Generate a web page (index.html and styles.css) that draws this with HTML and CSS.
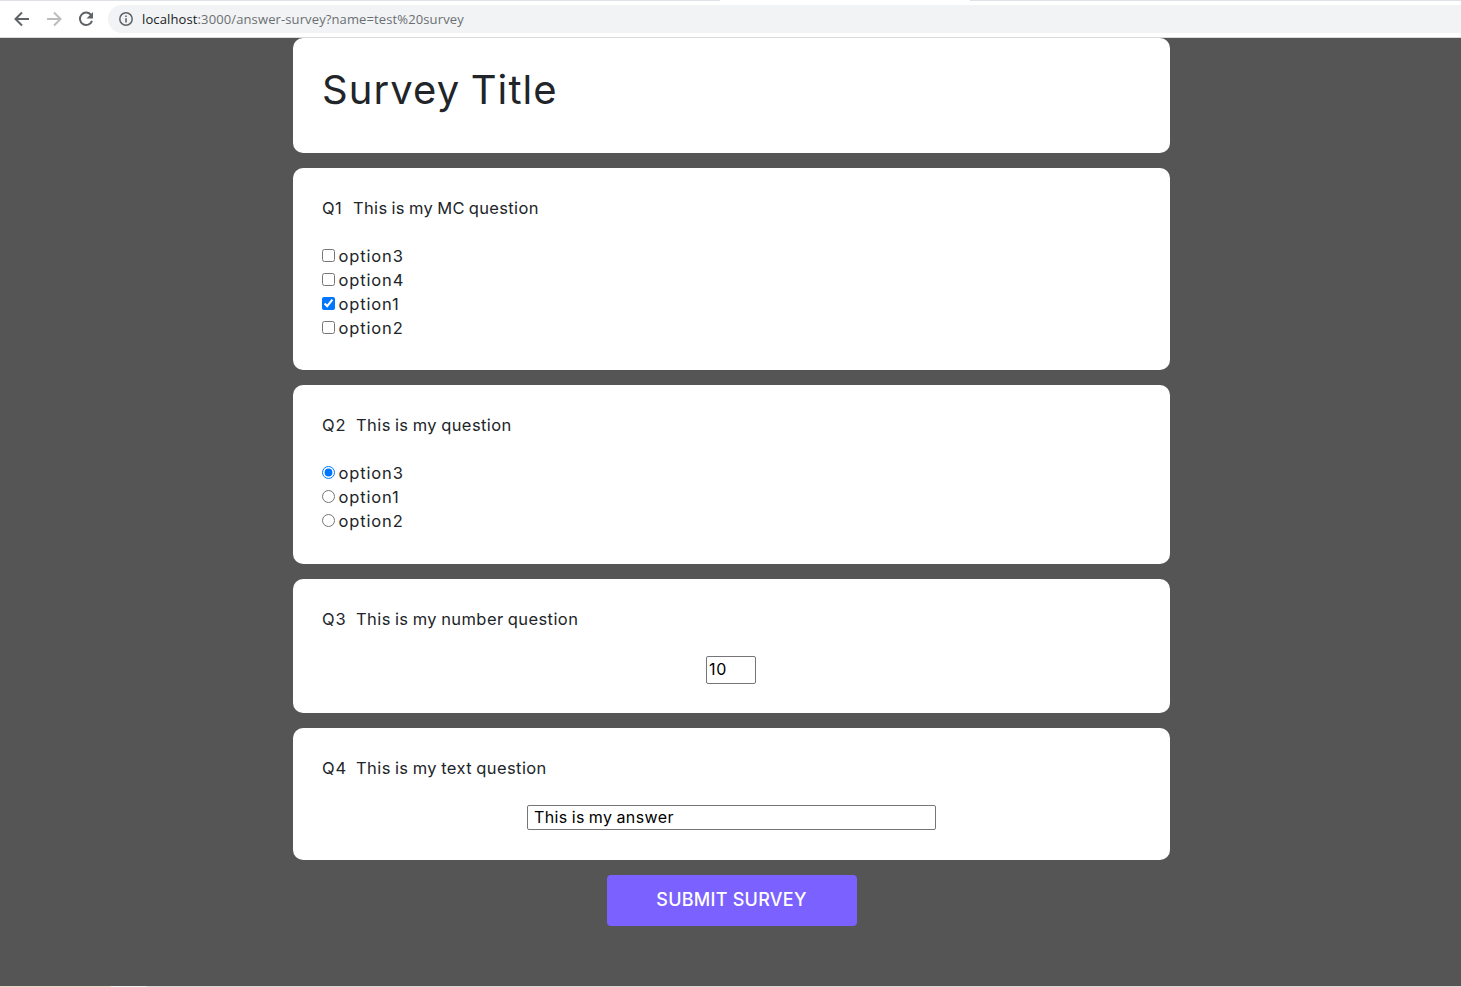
FILE: index.html
```html
<!DOCTYPE html>
<html lang="en">
<head>
<meta charset="utf-8">
<title>Answer survey</title>
<link rel="stylesheet" href="styles.css">
</head>
<body>
<header class="toolbar">
  <div class="tabs-edge"><span class="edge edge-left"></span><span class="edge edge-right"></span></div>
  <div class="nav">
    <svg class="icon" viewBox="0 0 16 16"><path d="M15 8H2M8 1.5 1.5 8 8 14.5" fill="none" stroke="#5f6368" stroke-width="2"/></svg>
    <svg class="icon" viewBox="0 0 16 16"><path d="M1 8h13M8 1.5 14.5 8 8 14.5" fill="none" stroke="#babcbe" stroke-width="2"/></svg>
    <svg class="icon" viewBox="0 0 16 16"><path d="M13.2 4.2A6.2 6.2 0 1 0 14 9.8" fill="none" stroke="#5f6368" stroke-width="2"/><path d="M15 1v6.5H8.5z" fill="#5f6368"/></svg>
    <div class="address">
      <svg class="info" viewBox="0 0 14 14"><circle cx="7" cy="7" r="6.2" fill="none" stroke="#5f6368" stroke-width="1.5"/><path d="M7 6.2v4.3M7 3.5v1.5" stroke="#5f6368" stroke-width="1.6"/></svg>
      <span class="url"><span class="host">localhost</span>:3000/answer-survey?name=test%20survey</span>
    </div>
  </div>
</header>
<main class="page">
  <section class="card card-title"><h1 class="title">Survey Title</h1></section>
  <section class="card card-mc">
    <p class="question"><span class="number">Q1</span><span class="prompt prompt-mc">This is my MC question</span></p>
    <label class="option"><input type="checkbox" class="choice"><span>option3</span></label>
    <label class="option"><input type="checkbox" class="choice"><span>option4</span></label>
    <label class="option"><input type="checkbox" class="choice" checked><span>option1</span></label>
    <label class="option"><input type="checkbox" class="choice"><span>option2</span></label>
  </section>
  <section class="card card-radio">
    <p class="question"><span class="number wide">Q2</span><span class="prompt">This is my question</span></p>
    <label class="option"><input type="radio" name="q2" class="choice" checked><span>option3</span></label>
    <label class="option"><input type="radio" name="q2" class="choice"><span>option1</span></label>
    <label class="option"><input type="radio" name="q2" class="choice"><span>option2</span></label>
  </section>
  <section class="card card-number">
    <p class="question"><span class="number wide">Q3</span><span class="prompt">This is my number question</span></p>
    <input class="field field-number" type="text" value="10">
  </section>
  <section class="card card-text">
    <p class="question"><span class="number wide">Q4</span><span class="prompt">This is my text question</span></p>
    <input class="field field-text" type="text" value="This is my answer">
  </section>
  <button class="submit">SUBMIT SURVEY</button>
</main>
<div class="bottom-edge"></div>
</body>
</html>
```
FILE: styles.css
```css
* { box-sizing: border-box; }
body {
  margin: 0;
  height: 987px;
  overflow: hidden;
  display: flex;
  flex-direction: column;
  background: #555;
  color: #212529;
  font: 16px/24px Inter, sans-serif;
}
.toolbar { height: 38px; background: #fff; border-bottom: 1px solid #dadada; flex: none; }
.tabs-edge { height: 1px; display: flex; justify-content: space-between; }
.edge { background: #dee1e6; height: 1px; }
.edge-left { width: 720px; }
.edge-right { width: 491px; }
.nav { display: flex; align-items: center; height: 28px; margin-top: 4px; padding-left: 14px; gap: 16px; }
.icon { width: 16px; height: 16px; flex: none; }
.address {
  flex: 1;
  height: 28px;
  margin-left: -2px;
  padding-left: 11px;
  display: flex;
  align-items: center;
  gap: 9px;
  background: #f1f3f4;
  border-radius: 14px 0 0 14px;
}
.info { width: 14px; height: 14px; }
.url { font: 13px/20px "Open Sans", sans-serif; color: #6b6f73; letter-spacing: 0.12px; white-space: nowrap; }
.host { color: #202124; }
.page { flex: 1; display: flex; flex-direction: column; align-items: center; gap: 15px; padding-left: 2px; }
.card { width: 877px; flex: none; background: #fff; border-radius: 10px; padding: 28px 29px 0; display: flex; flex-direction: column; }
.card-title { height: 115px; }
.card-mc { height: 202px; }
.card-radio { height: 179px; }
.card-number { height: 134px; }
.card-text { height: 132px; }
.title { margin: 0; font-size: 40px; line-height: 48px; font-weight: 400; letter-spacing: 1.1px; word-spacing: -2px; }
.question { margin: 0 0 24px; display: flex; font-size: 16.5px; letter-spacing: 0.42px; word-spacing: -0.9px; }
.number { width: 31px; letter-spacing: 0.5px; }
.wide { width: 34px; letter-spacing: 0.9px; }
.prompt-mc { letter-spacing: 0.33px; }
.option { display: flex; height: 24px; gap: 3.5px; font-size: 16.5px; letter-spacing: 0.85px; }
.choice { width: 13px; height: 13px; margin: 5px 0 0; accent-color: #0075ff; }
.field { align-self: center; border: 1px solid #767676; border-radius: 2px; background: #fff; color: #000; font: 16px/22px Inter, sans-serif; }
.field-number { width: 50px; height: 28px; margin: 1px 1px 0 0; padding: 0 2px 2px; letter-spacing: 0.8px; }
.field-text { width: 409px; height: 25px; margin-top: 1px; padding: 0 6px 2px; letter-spacing: 0.38px; word-spacing: -0.8px; }
.submit { width: 250px; height: 51px; flex: none; border: 0; border-radius: 4px; padding: 0 0 2px; background: #7b61ff; color: #fff; font: 500 18px/24px Inter, sans-serif; letter-spacing: 0.26px; }
.bottom-edge { height: 1px; background: linear-gradient(90deg, #e8d8c8 0 111px, #f0f0f0 111px 147px, #d8d8d4 147px); }
```
